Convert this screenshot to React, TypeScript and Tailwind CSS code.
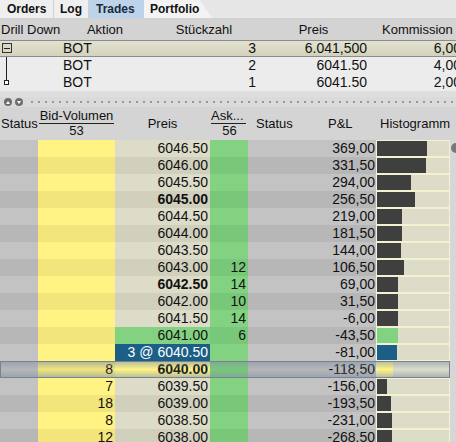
import React from 'react';

type Row = {
  p: string;
  pl: string;
  h: number;
  bid?: string;
  ask?: string;
  bold?: boolean;
  kind?: 'green' | 'blue' | 'yellow';
  sel?: boolean;
};

const ROWS: Row[] = [
  { p: '6046.50', pl: '369,00', h: 50 },
  { p: '6046.00', pl: '331,50', h: 49 },
  { p: '6045.50', pl: '294,00', h: 34 },
  { p: '6045.00', pl: '256,50', h: 38, bold: true },
  { p: '6044.50', pl: '219,00', h: 25 },
  { p: '6044.00', pl: '181,50', h: 25 },
  { p: '6043.50', pl: '144,00', h: 24 },
  { p: '6043.00', ask: '12', pl: '106,50', h: 27 },
  { p: '6042.50', ask: '14', pl: '69,00', h: 21, bold: true },
  { p: '6042.00', ask: '10', pl: '31,50', h: 21 },
  { p: '6041.50', ask: '14', pl: '-6,00', h: 21 },
  { p: '6041.00', ask: '6', pl: '-43,50', h: 21, kind: 'green' },
  { p: '3 @ 6040.50', pl: '-81,00', h: 20, kind: 'blue' },
  { p: '6040.00', bid: '8', pl: '-118,50', h: 16, kind: 'yellow', bold: true, sel: true },
  { p: '6039.50', bid: '7', pl: '-156,00', h: 10 },
  { p: '6039.00', bid: '18', pl: '-193,50', h: 14 },
  { p: '6038.50', bid: '8', pl: '-231,00', h: 15 },
  { p: '6038.00', bid: '12', pl: '-268,50', h: 15 },
];

const TRADES = [
  { qty: '3', price: '6.041,500', comm: '6,00', parent: true },
  { qty: '2', price: '6041.50', comm: '4,00' },
  { qty: '1', price: '6041.50', comm: '2,00' },
];

const LADDER_COLS = 'grid-cols-[38px_77px_95px_38px_57px_71px_74px_6px]';
const TRADE_COLS = 'grid-cols-[60px_90px_108px_111px_100px]';

function Tabs() {
  return (
    <div className="flex h-[19px] bg-[#e6e6e6] border-b border-[#d0d0d0] text-[12px] font-bold text-[#111]">
      <div className="w-[54px] flex items-center pl-[7px] bg-[#efefef] border-r border-[#cfcfcf]">Orders</div>
      <div className="w-[35px] flex items-center pl-[6px] bg-[#efefef] border-r border-[#cfcfcf]">Log</div>
      <div className="w-[55px] flex items-center pl-[7px] bg-[#bcd3e9] text-[#1b2a3a]">Trades</div>
      <div className="w-[68px] flex items-center pl-[6px] bg-[#f3f3f3] [clip-path:polygon(0_0,82%_0,100%_100%,0_100%)]">
        Portfolio
      </div>
    </div>
  );
}

function TradesTable() {
  return (
    <div className="text-[#111]">
      <div className={`grid ${TRADE_COLS} h-[21px] items-center bg-[#d3d3d3] text-[13px] leading-[21px] whitespace-nowrap`}>
        <div className="pl-[1px]">Drill Down</div>
        <div className="text-center">Aktion</div>
        <div className="text-center">Stückzahl</div>
        <div className="text-center">Preis</div>
        <div className="pl-[13px]">Kommission</div>
      </div>
      {TRADES.map((t, i) => (
        <div
          key={i}
          className={`grid ${TRADE_COLS} text-[14px] whitespace-nowrap ${
            t.parent
              ? 'h-[17px] leading-[15px] bg-[linear-gradient(to_bottom,#e2e2d0,#d2d2bc)] border-y border-[#8c8c8c]'
              : 'h-[17px] leading-[17px] bg-[#ececec]'
          }`}
        >
          <div className="relative h-full">
            {t.parent ? (
              <div className="absolute left-[2px] top-[2px] w-[10px] h-[10px] border border-[#333] bg-[#d8d8c4] flex items-center justify-center">
                <div className="w-[6px] h-px bg-[#222]" />
              </div>
            ) : (
              <>
                <div className={`absolute left-[6px] top-0 w-px bg-[#222] ${i === 1 ? 'h-full' : 'h-[6px]'}`} />
                {i === 2 && (
                  <div className="absolute left-[4px] top-[6px] w-[5px] h-[5px] border border-[#222] bg-white" />
                )}
              </>
            )}
          </div>
          <div className="pl-[3px]">BOT</div>
          <div className="text-right pr-[2px]">{t.qty}</div>
          <div className="text-right pr-[2px]">{t.price}</div>
          <div className="text-right pr-[8px]">{t.comm}</div>
        </div>
      ))}
      <div className="h-[6px] bg-[#dedede]" />
    </div>
  );
}

function Splitter() {
  return (
    <div className="h-[10px] bg-[#dadada] flex items-center pl-[4px] gap-[3px] overflow-hidden">
      <div className="shrink-0 w-[8px] h-[8px] rounded-full bg-[#6e6e6e] flex items-center justify-center">
        <div className="w-0 h-0 border-x-[2px] border-x-transparent border-b-[3px] border-b-white" />
      </div>
      <div className="shrink-0 w-[8px] h-[8px] rounded-full bg-[#6e6e6e] flex items-center justify-center">
        <div className="w-0 h-0 border-x-[2px] border-x-transparent border-t-[3px] border-t-white" />
      </div>
      <div className="flex shrink-0 gap-[5px] ml-[5px]">
        {Array.from({ length: 70 }).map((_, i) => (
          <div key={i} className="shrink-0 w-[2px] h-[2px] rounded-full bg-[#808080]" />
        ))}
      </div>
    </div>
  );
}

function LadderHeader() {
  return (
    <div className={`grid ${LADDER_COLS} h-[33px] items-center bg-[#d4d4d4] text-[13px] text-[#111] whitespace-nowrap`}>
      <div className="pl-[1px]">Status</div>
      <div className="flex flex-col items-center leading-[14px]">
        <div className="w-[75px] text-center border-b border-[#222]">Bid-Volumen</div>
        <div>53</div>
      </div>
      <div className="text-center">Preis</div>
      <div className="flex flex-col leading-[14px] pl-[1px]">
        <div className="w-[35px] border-b border-[#222] overflow-hidden">Ask...</div>
        <div className="text-center">56</div>
      </div>
      <div className="pl-[8px]">Status</div>
      <div className="pl-[23px]">P&amp;L</div>
      <div className="pl-[4px]">Histogramm</div>
      <div />
    </div>
  );
}

function LadderRow({ r, i }: { r: Row; i: number }) {
  const even = i % 2 === 0;
  const gray = even ? 'bg-[#c3c3c3]' : 'bg-[#b7b7b7]';
  const yellow = even ? 'bg-[#fff384]' : 'bg-[#f2e57c]';
  const green = even ? 'bg-[#82d282]' : 'bg-[#79c879]';
  let preisBg = even ? 'bg-[#dcdcc8]' : 'bg-[#d0d0bd]';
  let preisText = 'text-[#111]';
  if (r.kind === 'green') preisBg = 'bg-[#82d282]';
  if (r.kind === 'blue') {
    preisBg = 'bg-[#1b5f86]';
    preisText = 'text-white';
  }
  if (r.kind === 'yellow') preisBg = 'bg-[#fff384]';
  const bar =
    r.kind === 'green'
      ? 'bg-[#82d282]'
      : r.kind === 'blue'
      ? 'bg-[#1b5f86]'
      : r.kind === 'yellow'
      ? 'bg-[#fff384]'
      : 'bg-[#3f3f3f]';

  return (
    <div className={`relative grid ${LADDER_COLS} h-[17px] text-[14px] leading-[17px] text-[#111] whitespace-nowrap`}>
      <div className={gray} />
      <div className={`${yellow} text-right pr-[2px]`}>{r.bid}</div>
      <div className={`${preisBg} ${preisText} text-right pr-[2px] ${r.bold ? 'font-bold' : ''}`}>{r.p}</div>
      <div className={`${green} text-right pr-[2px]`}>{r.ask}</div>
      <div className={gray} />
      <div className={`${gray} text-right pr-[1px]`}>{r.pl}</div>
      <div className="bg-[#f4f0d2] px-px pt-px">
        <div className="h-[15px] bg-[#dcdcc8] flex">
          <div className={`${bar} h-full`} style={{ width: r.h }} />
        </div>
      </div>
      <div className="bg-[#d6d6d6] relative overflow-hidden">
        {i === 0 && <div className="absolute left-[1px] top-[3px] w-[10px] h-[10px] rounded-full bg-[#777]" />}
      </div>
      {r.sel && (
        <div className="absolute left-0 top-0 bottom-0 right-[6px] border border-[#7a828c] bg-[linear-gradient(to_bottom,rgba(130,150,175,0.55),rgba(255,255,255,0)_50%,rgba(130,150,175,0.55))]" />
      )}
    </div>
  );
}

export default function App() {
  return (
    <div className="w-[456px] h-[442px] overflow-hidden bg-[#e6e6e6] font-['Liberation_Sans',Arial,sans-serif]">
      <Tabs />
      <TradesTable />
      <Splitter />
      <LadderHeader />
      <div>
        {ROWS.map((r, i) => (
          <LadderRow key={r.p} r={r} i={i} />
        ))}
      </div>
    </div>
  );
}
